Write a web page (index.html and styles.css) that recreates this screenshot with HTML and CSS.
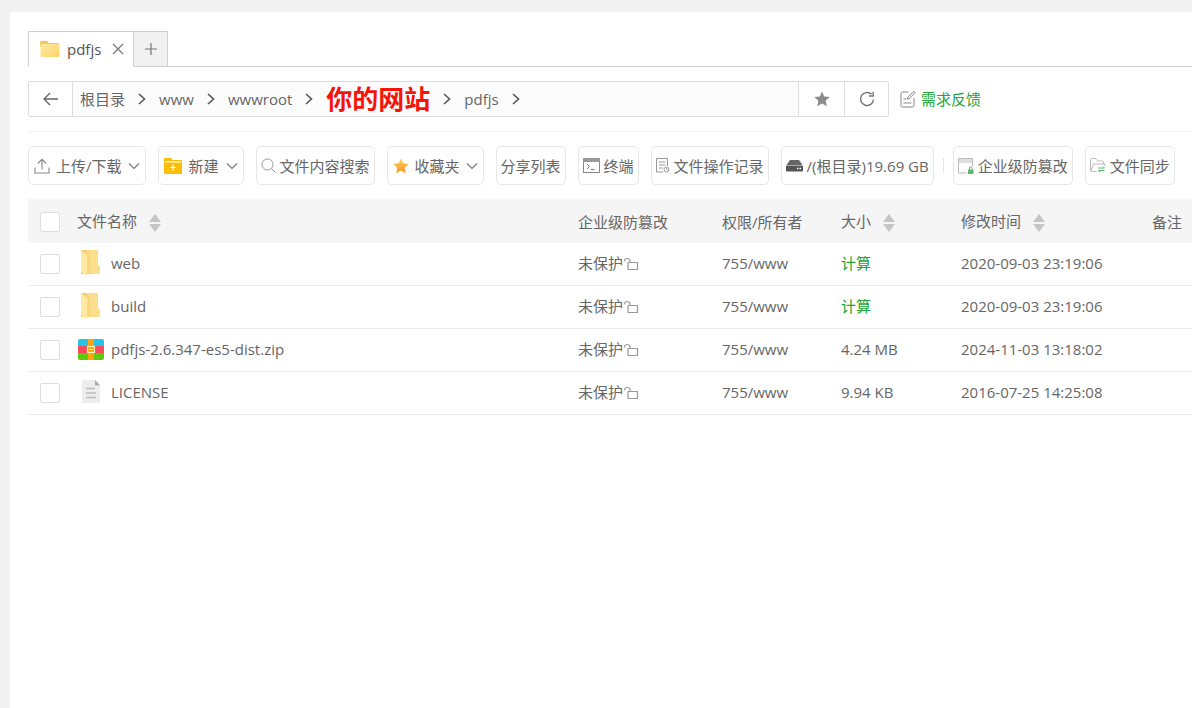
FILE: index.html
```html
<!DOCTYPE html>
<html lang="zh-CN">
<head>
<meta charset="utf-8">
<title>文件管理</title>
<link rel="stylesheet" href="styles.css">
</head>
<body>
<svg class="defs" aria-hidden="true">
  <defs>
    <linearGradient id="gold" x1="0" y1="0" x2="0" y2="1"><stop offset="0" stop-color="#ffd65a"/><stop offset="1" stop-color="#f79420"/></linearGradient>
    <linearGradient id="sand" x1="0" y1="0" x2="1" y2="1"><stop offset="0" stop-color="#ffe9a6"/><stop offset="1" stop-color="#fbd565"/></linearGradient>
    <symbol id="chevron-right" viewBox="0 0 8 14"><path d="M1 2l5.500 5L1 12" fill="none" stroke="#555" stroke-width="1.600"/></symbol>
    <symbol id="chevron-down" viewBox="0 0 12 8"><path d="M1 1.500l5 5 5-5" fill="none" stroke="#777" stroke-width="1.200"/></symbol>
    <symbol id="sort" viewBox="0 0 12 18"><path d="M6 0l6 8H0zM0 10h12l-6 8z" fill="#c5c5c5"/></symbol>
    <symbol id="lock" viewBox="0 0 16 16"><path d="M5 7.500h9.500v7H5zM7 7.500V5a3 2.500 0 0 0-5.500 0v1.500" fill="none" stroke="#999" stroke-width="1.200" stroke-linejoin="round"/></symbol>
    <symbol id="folder" viewBox="0 0 28 28">
      <path d="M9 1h12v15l2 2v6l-1 1H9z" fill="#f7d67c"/>
      <path d="M12 1h9v15l2 2v6l-1 1h-8z" fill="#fbdf8c"/>
      <path d="M4 1h5v24H4z" fill="#f3cd6e"/>
      <path d="M4 1l5 4c1 .8 1.300 1.500 1.300 2.500v19.500L5 24c-.7-.5-1-1-1-2z" fill="#ffe8a0"/>
    </symbol>
  </defs>
</svg>

<main class="panel">
  <nav class="tabs" aria-label="标签页">
    <div class="tab">
      <svg class="tab-folder" width="20" height="18" viewBox="0 0 20 18"><path d="M0 2a1 1 0 0 1 1-1h6l2 2h9a1 1 0 0 1 1 1v3H0z" fill="#f6c95c"/><rect x=".5" y="4" width="19" height="13" rx="1" fill="url(#sand)"/></svg>
      <span>pdfjs</span>
      <button class="plain" type="button" aria-label="关闭"><svg width="12" height="12" viewBox="0 0 12 12"><path d="M1 1l10 10M11 1L1 11" stroke="#777" stroke-width="1.200"/></svg></button>
    </div>
    <button class="tab-add" type="button" aria-label="新标签页"><svg width="12" height="12" viewBox="0 0 12 12"><path d="M6 0v12M0 6h12" stroke="#777" stroke-width="1.200"/></svg></button>
  </nav>

  <div class="location">
    <div class="pathbar">
      <button class="cell back" type="button" aria-label="返回"><svg width="16" height="14" viewBox="0 0 16 14"><path d="M15 7H1.500M7 1L1 7l6 6" fill="none" stroke="#666" stroke-width="1.400"/></svg></button>
      <div class="crumbs">
        <a href="#">根目录</a><svg width="8" height="14"><use href="#chevron-right"/></svg>
        <a href="#">www</a><svg width="8" height="14"><use href="#chevron-right"/></svg>
        <a href="#">wwwroot</a><svg width="8" height="14"><use href="#chevron-right"/></svg>
        <a class="site" href="#">你的网站</a><svg width="8" height="14"><use href="#chevron-right"/></svg>
        <a href="#">pdfjs</a><svg width="8" height="14"><use href="#chevron-right"/></svg>
      </div>
      <button class="cell star" type="button" aria-label="收藏"><svg width="16" height="16" viewBox="0 0 16 16"><path d="M8 .5l2.200 5 5.500.6-4.100 3.700 1.200 5.400L8 12.400l-4.800 2.800 1.200-5.400L.3 6.100l5.500-.6z" fill="#8b8b8b"/></svg></button>
      <button class="cell" type="button" aria-label="刷新"><svg width="16" height="16" viewBox="0 0 16 16"><path d="M14.500 8.500a6.500 6.500 0 1 1-2-5.200" fill="none" stroke="#777" stroke-width="1.400"/><path d="M10 5h4.200V.8" fill="none" stroke="#777" stroke-width="1.400"/></svg></button>
    </div>
    <div class="aside">
      <a class="feedback" href="#"><svg width="16" height="18" viewBox="0 0 16 18"><path d="M8.500 2H2.500A1.500 1.500 0 0 0 1 3.500v12A1.500 1.500 0 0 0 2.500 17h10a1.500 1.500 0 0 0 1.500-1.500V8M3.500 9h3M3.500 13h8M8 7l5.500-5.500 1.500 1L9 9H7.500z" fill="none" stroke="#888"/></svg>需求反馈</a>
    </div>
  </div>

  <div class="toolbar">
    <button class="tool roomy" type="button"><svg width="16" height="16" viewBox="0 0 16 16"><path d="M8 11.500V1.500M3.800 5.500L8 1.300l4.200 4.200M1 9.500V15h14V9.500" fill="none" stroke="#888" stroke-width="1.100"/></svg>上传/下载<svg width="12" height="8"><use href="#chevron-down"/></svg></button>
    <button class="tool wide" type="button"><svg width="18" height="16" viewBox="0 0 18 16"><path d="M0 1a1 1 0 0 1 1-1h6l1.500 2H17a1 1 0 0 1 1 1v12a1 1 0 0 1-1 1H1a1 1 0 0 1-1-1z" fill="#fbbd08"/><path d="M1 3.800h16M9 6.500v6M6 9.500h6" stroke="#fff" stroke-width="1.200"/></svg>新建<svg width="12" height="8"><use href="#chevron-down"/></svg></button>
    <button class="tool" type="button"><svg width="15" height="15" viewBox="0 0 15 15"><circle cx="6.500" cy="6.500" r="5.500" fill="none" stroke="#999"/><path d="M10.500 10.500l4 4" stroke="#999"/></svg>文件内容搜索</button>
    <button class="tool roomy" type="button"><svg width="16" height="16" viewBox="0 0 16 16"><path d="M8 .5l2.300 4.800 5.400.7-4 3.700 1 5.500L8 12.600l-4.700 2.600 1-5.500L.3 6l5.400-.7z" fill="url(#gold)"/></svg>收藏夹<svg width="12" height="8"><use href="#chevron-down"/></svg></button>
    <button class="tool" type="button">分享列表</button>
    <button class="tool" type="button"><svg width="17" height="15" viewBox="0 0 17 15"><rect x=".5" y=".5" width="16" height="14" fill="none" stroke="#888"/><path d="M0 0h17v4H0z" fill="#999"/><path d="M4 6l2.500 2.500L4 11M8 11.500h3.500" fill="none" stroke="#777"/></svg>终端</button>
    <button class="tool" type="button"><svg width="14" height="15" viewBox="0 0 14 15"><path d="M7 14H.5V.5h11V8M3 4h6.500M3 7h6.500M3 10h4" fill="none" stroke="#999"/><circle cx="10.500" cy="11.500" r="2.500" fill="#fff" stroke="#999"/><path d="M10.500 10v1.500H12" fill="none" stroke="#999" stroke-width=".8"/></svg>文件操作记录</button>
    <button class="tool" type="button"><svg width="17" height="13" viewBox="0 0 17 13"><path d="M4 1h9l3.500 5H.5z" fill="#666"/><rect y="6.500" width="17" height="6" rx="1" fill="#555"/><path d="M11 9.500h1.500M13.500 9.500H15" stroke="#fff" stroke-width="1.500"/></svg>/(根目录)19.69 GB</button>
    <span class="divider"></span>
    <button class="tool" type="button"><svg width="16" height="16" viewBox="0 0 16 16"><path d="M9 15H.5V.5h14V8M.5 4h14" fill="none" stroke="#bbb"/><path d="M1 1h13v2H1z" fill="#ddd"/><path d="M10 11.500h5.500V16H10z" fill="#5db870"/><path d="M11.500 11.500V10a1.200 1.200 0 0 1 2.400 0v1.500" fill="none" stroke="#5db870"/></svg>企业级防篡改</button>
    <button class="tool" type="button"><svg width="16" height="15" viewBox="0 0 16 15"><path d="M6.500 13.500H1.500a1 1 0 0 1-1-1V1.500a1 1 0 0 1 1-1h4l2 2.500h5a1 1 0 0 1 1 1v2M1 13L3.500 6h11.500L14.500 8" fill="none" stroke="#bbb"/><path d="M8 10h6.500l-1.500-1.500M14.500 12.500H8.500L10 14" fill="none" stroke="#5db870"/></svg>文件同步</button>
  </div>

  <table class="files">
    <colgroup><col class="c-check"><col><col class="c-guard"><col class="c-owner"><col class="c-size"><col class="c-time"><col class="c-note"></colgroup>
    <thead>
      <tr>
        <th><input type="checkbox" aria-label="全选"></th>
        <th>文件名称<button class="plain sort" type="button" aria-label="按名称排序"><svg width="12" height="18"><use href="#sort"/></svg></button></th>
        <th>企业级防篡改</th>
        <th>权限/所有者</th>
        <th>大小<button class="plain sort" type="button" aria-label="按大小排序"><svg width="12" height="18"><use href="#sort"/></svg></button></th>
        <th>修改时间<button class="plain sort" type="button" aria-label="按时间排序"><svg width="12" height="18"><use href="#sort"/></svg></button></th>
        <th>备注</th>
      </tr>
    </thead>
    <tbody>
      <tr>
        <td><input type="checkbox" aria-label="web"></td>
        <td><span class="name"><svg width="28" height="28"><use href="#folder"/></svg>web</span></td>
        <td><span class="guard">未保护<svg width="16" height="16"><use href="#lock"/></svg></span></td>
        <td>755/www</td><td><a href="#">计算</a></td><td>2020-09-03 23:19:06</td><td></td>
      </tr>
      <tr>
        <td><input type="checkbox" aria-label="build"></td>
        <td><span class="name"><svg width="28" height="28"><use href="#folder"/></svg>build</span></td>
        <td><span class="guard">未保护<svg width="16" height="16"><use href="#lock"/></svg></span></td>
        <td>755/www</td><td><a href="#">计算</a></td><td>2020-09-03 23:19:06</td><td></td>
      </tr>
      <tr>
        <td><input type="checkbox" aria-label="pdfjs-2.6.347-es5-dist.zip"></td>
        <td><span class="name"><svg width="28" height="28" viewBox="0 0 28 28"><path d="M1 11V6a2 2 0 0 1 2-2h22a2 2 0 0 1 2 2v5z" fill="#25c3e6"/><path d="M1 11h26v7H1z" fill="#fa4b5d"/><path d="M1 18h26v5a2 2 0 0 1-2 2H3a2 2 0 0 1-2-2z" fill="#60c80c"/><path d="M11 4h6v21h-6z" fill="#fda50b"/><rect x="10.500" y="11.500" width="7" height="6" fill="#fda50b" stroke="#fff0c0" stroke-width="1.200"/><path d="M12 14.500h4" stroke="#fff0c0"/></svg>pdfjs-2.6.347-es5-dist.zip</span></td>
        <td><span class="guard">未保护<svg width="16" height="16"><use href="#lock"/></svg></span></td>
        <td>755/www</td><td>4.24 MB</td><td>2024-11-03 13:18:02</td><td></td>
      </tr>
      <tr>
        <td><input type="checkbox" aria-label="LICENSE"></td>
        <td><span class="name"><svg width="28" height="28" viewBox="0 0 28 28"><path d="M5 2h13l5 5v18H5z" fill="#ededed"/><path d="M18 2l5 5.500h-5z" fill="#aaa"/><path d="M9 10.500h9M9 15h10M9 19.500h10" stroke="#bdbdbd" stroke-width="1.400"/></svg>LICENSE</span></td>
        <td><span class="guard">未保护<svg width="16" height="16"><use href="#lock"/></svg></span></td>
        <td>755/www</td><td>9.94 KB</td><td>2016-07-25 14:25:08</td><td></td>
      </tr>
    </tbody>
  </table>
</main>
</body>
</html>
```
FILE: styles.css
```css
* { box-sizing: border-box; }

body {
  margin: 0;
  padding: 12px 0 0 10px;
  min-height: 100vh;
  display: flex;
  background: #f1f1f1;
  color: #666;
  font: 15px/20px "Open Sans", "Noto Sans CJK SC", sans-serif;
  overflow-x: hidden;
}

svg { flex: none; }
.defs { position: absolute; width: 0; height: 0; }

button { font: inherit; color: inherit; cursor: pointer; }
a { color: #20a53a; text-decoration: none; }

.plain {
  display: inline-flex;
  padding: 0;
  border: 0;
  background: none;
}

.panel {
  flex: 1;
  min-width: 0;
  padding: 19px 0 0 18px;
  background: #fff;
}

.tabs {
  display: flex;
  height: 36px;
  border-bottom: 1px solid #d0d0d0;
}

.tab {
  display: flex;
  align-items: center;
  height: 36px;
  padding: 0 9px 0 11px;
  border: 1px solid #d0d0d0;
  border-bottom-color: #fff;
  background: #fff;
}
.tab span { margin: 0 11px 0 7px; color: #555; }

.tab-add {
  display: flex;
  align-items: center;
  justify-content: center;
  width: 34px;
  height: 36px;
  padding: 0;
  border: 1px solid #d0d0d0;
  border-left: 0;
  background: #f0f0f0;
}

.location {
  display: flex;
  padding: 14px 0;
  border-bottom: 1px solid #f1f1f1;
}

.pathbar {
  display: flex;
  flex: 1;
  height: 36px;
  border: 1px solid #dcdcdc;
  border-radius: 2px;
}

.cell {
  display: flex;
  align-items: center;
  justify-content: center;
  width: 44px;
  padding: 0;
  border: 0;
  border-left: 1px solid #dcdcdc;
  background: #fff;
}
.back { border-left: 0; border-right: 1px solid #dcdcdc; }
.star { width: 46px; }

.crumbs {
  display: flex;
  flex: 1;
  align-items: center;
  gap: 13px;
  padding-left: 7px;
  background: #fcfcfc;
}
.crumbs a { color: #666; }
.crumbs .site { color: #f5140a; font-size: 26px; font-weight: 700; }

.aside {
  display: flex;
  align-items: center;
  width: 303px;
  padding-left: 11px;
}
.feedback { display: flex; align-items: center; gap: 5px; }

.toolbar {
  display: flex;
  align-items: center;
  gap: 12px;
  padding: 14px 0;
}

.tool {
  display: flex;
  flex: none;
  align-items: center;
  gap: 4px;
  height: 39px;
  padding: 0 4px;
  border: 1px solid #e6e6e6;
  border-radius: 5px;
  background: #fff;
  white-space: nowrap;
}
.roomy { gap: 6px; padding: 0 5px; }
.wide { gap: 7px; padding: 0 5px; }

.divider { width: 1px; height: 15px; margin: 0 -3px; background: #e4e4e4; }

.files {
  width: 100%;
  table-layout: fixed;
  border-collapse: collapse;
}
.c-check { width: 49px; }
.c-guard { width: 144px; }
.c-owner { width: 119px; }
.c-size { width: 120px; }
.c-time { width: 191px; }
.c-note { width: 40px; }

.files th, .files td {
  height: 43px;
  padding: 0;
  border-bottom: 1px solid #ececec;
  text-align: left;
  font-weight: 400;
  white-space: nowrap;
}
.files th { padding-top: 3px; background: #f5f5f5; border-color: #f5f5f5; }
.files td + td { padding-bottom: 1px; }

.files input {
  display: block;
  width: 20px;
  height: 20px;
  margin: 0 0 0 12px;
  appearance: none;
  border: 1px solid #dedede;
  border-radius: 2px;
  background: #fff;
}

.sort { margin-left: 12px; vertical-align: middle; }
.name { display: flex; align-items: center; gap: 6px; }
.guard { display: flex; align-items: center; }
```
